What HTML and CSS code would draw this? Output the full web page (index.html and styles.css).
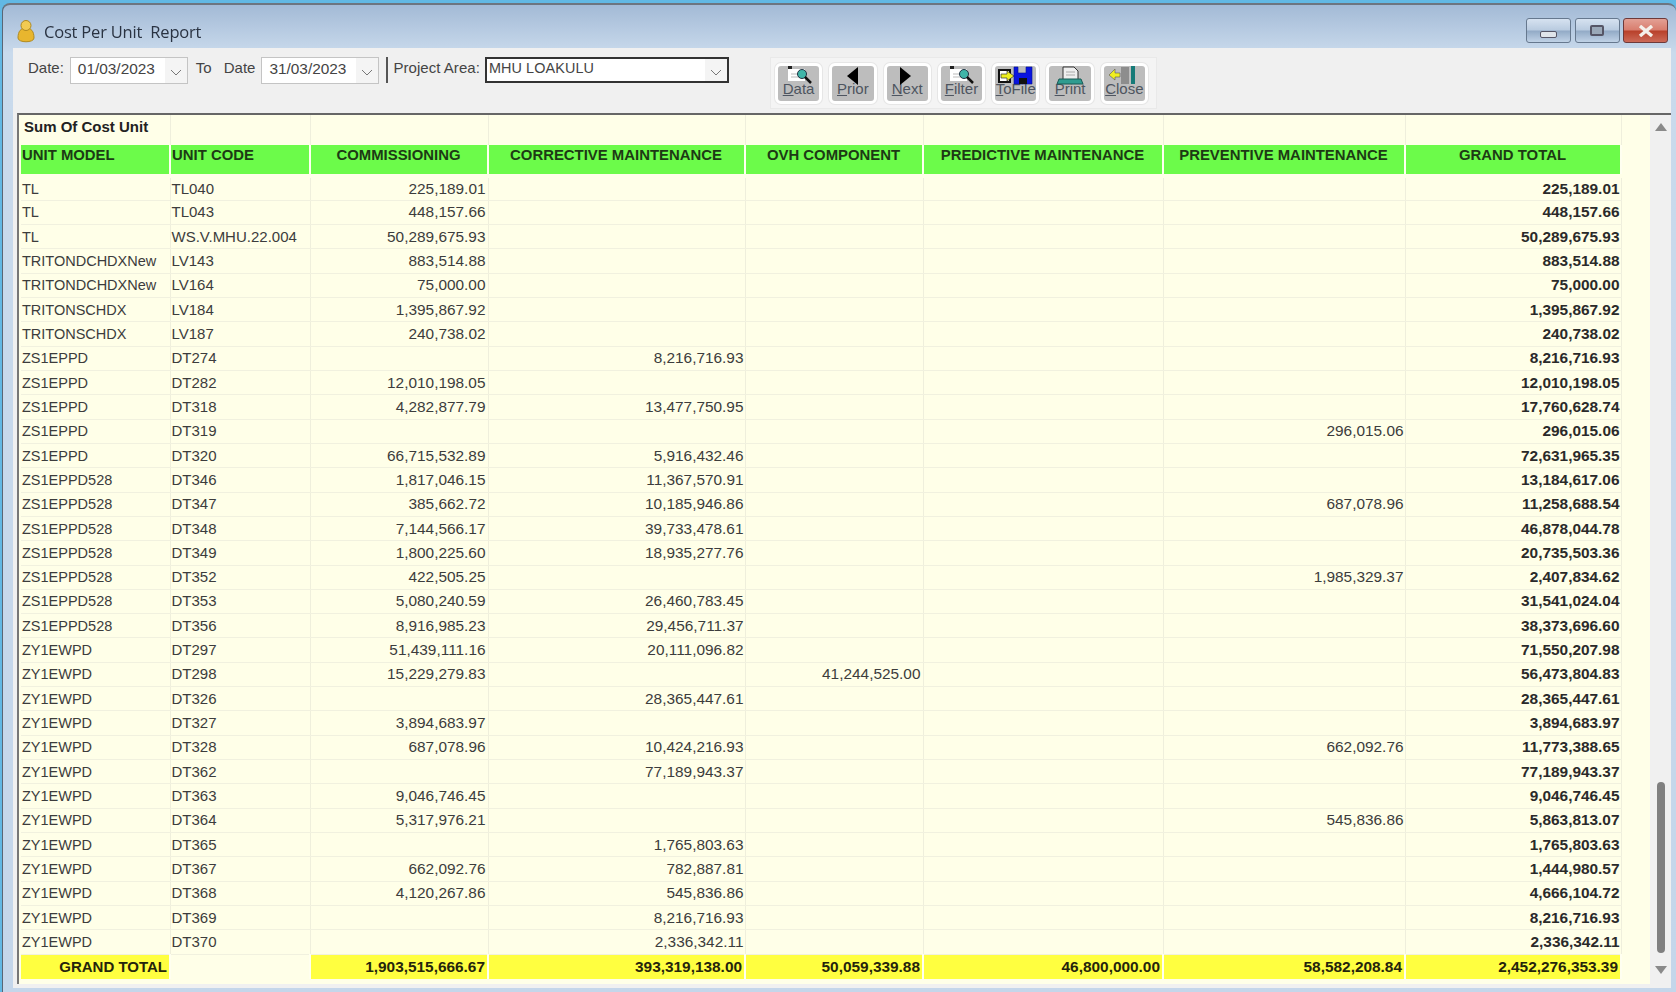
FILE: index.html
```html
<!DOCTYPE html>
<html lang="en">
<head>
    <meta charset="UTF-8">
    <title>Cost Per Unit Report</title>
    <link rel="stylesheet" href="styles.css">
</head>
<body>
    <div class="window">
        <div class="titlebar">
            <svg class="app-icon" width="20" height="24" viewBox="0 0 20 24">
                <path d="M2 19c0-7 3-10 8-10s8 3 8 10c0 5-16 5-16 0z" fill="#e8b62e" stroke="#b08a20"/>
                <circle cx="10" cy="6.5" r="5" fill="#f2cb52" stroke="#b08a20"/>
            </svg>
            <span class="title">Cost Per Unit&nbsp; Report</span>
            <div class="caption-buttons">
                <div class="cap-btn"><span class="cap-min"></span></div>
                <div class="cap-btn"><span class="cap-max"></span></div>
                <div class="cap-btn cap-close"><svg width="16" height="12" viewBox="0 0 16 12"><path d="M2 1l12 10M14 1L2 11" stroke="#f4f0ea" stroke-width="3.4"/></svg></div>
            </div>
        </div>
        <div class="content">
            <div class="toolbar">
                <label class="lbl lbl-date">Date:</label>
                <div class="date-box"><span class="box-text">01/03/2023</span><span class="drop"><svg width="12" height="7" viewBox="0 0 12 7"><path d="M1 1l5 5 5-5" fill="none" stroke="#777"/></svg></span></div>
                <label class="lbl lbl-to">To</label>
                <label class="lbl lbl-date2">Date</label>
                <div class="date-box"><span class="box-text">31/03/2023</span><span class="drop"><svg width="12" height="7" viewBox="0 0 12 7"><path d="M1 1l5 5 5-5" fill="none" stroke="#777"/></svg></span></div>
                <div class="sep"></div>
                <label class="lbl lbl-area">Project Area:</label>
                <div class="combo"><span class="box-text">MHU LOAKULU</span><span class="drop"><svg width="12" height="7" viewBox="0 0 12 7"><path d="M1 1l5 5 5-5" fill="none" stroke="#777"/></svg></span></div>
                <div class="nav-panel">
                    <button class="nav-btn">
                        <svg class="nav-icon" width="36" height="26" viewBox="0 0 36 26"><rect x="7" y="3" width="17" height="12" fill="#fff"/><rect x="7" y="0" width="4" height="3" fill="#222"/><path d="M10 8h9M10 11h9" stroke="#bbb"/><circle cx="21" cy="8" r="4.5" fill="#3fb5a8" stroke="#234"/><path d="M24 11l6 6" stroke="#111" stroke-width="2.5"/></svg>
                        <span class="nav-label"><u>D</u>ata</span>
                    </button>
                    <button class="nav-btn">
                        <svg class="nav-icon" width="36" height="26" viewBox="0 0 36 26"><path d="M23 1v18L12 10z" fill="#000"/></svg>
                        <span class="nav-label"><u>P</u>rior</span>
                    </button>
                    <button class="nav-btn">
                        <svg class="nav-icon" width="36" height="26" viewBox="0 0 36 26"><path d="M11 1v18l11-9z" fill="#000"/></svg>
                        <span class="nav-label"><u>N</u>ext</span>
                    </button>
                    <button class="nav-btn">
                        <svg class="nav-icon" width="36" height="26" viewBox="0 0 36 26"><rect x="7" y="3" width="17" height="12" fill="#fff"/><rect x="7" y="0" width="4" height="3" fill="#222"/><path d="M10 8h9M10 11h9" stroke="#bbb"/><circle cx="21" cy="8" r="4.5" fill="#3fb5a8" stroke="#234"/><path d="M24 11l6 6" stroke="#111" stroke-width="2.5"/></svg>
                        <span class="nav-label"><u>F</u>ilter</span>
                    </button>
                    <button class="nav-btn">
                        <svg class="nav-icon" width="40" height="26" viewBox="0 0 40 26"><rect x="3" y="4" width="11" height="12" fill="#fff" stroke="#111" stroke-width="2"/><path d="M5 8h6V5l7 5-7 5v-3H5z" fill="#eef020" stroke="#333" stroke-width=".7"/><path d="M18 1h4v6h8V1h6v17H18z" fill="#0a14e0" stroke="#001090" stroke-width=".6"/><rect x="23" y="12" width="8" height="6" fill="#111"/></svg>
                        <span class="nav-label"><u>T</u>oFile</span>
                    </button>
                    <button class="nav-btn">
                        <svg class="nav-icon" width="36" height="26" viewBox="0 0 36 26"><path d="M11 1h11l4 4v9H11z" fill="#eee" stroke="#333"/><path d="M7 13h22l2 5H5z" fill="#2f9c90" stroke="#1a5a55"/><path d="M14 6h9M14 9h9" stroke="#aaa"/></svg>
                        <span class="nav-label"><u>P</u>rint</span>
                    </button>
                    <button class="nav-btn">
                        <svg class="nav-icon" width="36" height="26" viewBox="0 0 36 26"><rect x="15" y="1" width="8" height="17" fill="#8d8d8d"/><rect x="25" y="0" width="4" height="18" fill="#167a78"/><path d="M14 7H9V3L3 9l6 5v-3h5z" fill="#f0ee20" stroke="#555" stroke-width=".6"/></svg>
                        <span class="nav-label"><u>C</u>lose</span>
                    </button>
                </div>
            </div>
            <div class="report">
                <table class="grid">
                    <colgroup>
                        <col class="c-model"><col class="c-code"><col class="c-comm"><col class="c-corr">
                        <col class="c-ovh"><col class="c-pred"><col class="c-prev"><col class="c-total">
                    </colgroup>
                    <thead>
                        <tr class="sum-row"><th class="left">Sum Of Cost Unit</th><th></th><th></th><th></th><th></th><th></th><th></th><th></th></tr>
                        <tr class="head-row"><th class="left">UNIT MODEL</th><th class="left">UNIT CODE</th><th>COMMISSIONING</th><th>CORRECTIVE MAINTENANCE</th><th>OVH COMPONENT</th><th>PREDICTIVE MAINTENANCE</th><th>PREVENTIVE MAINTENANCE</th><th>GRAND TOTAL</th></tr>
                    </thead>
                    <tbody>
                        <tr><td>TL</td><td>TL040</td><td>225,189.01</td><td></td><td></td><td></td><td></td><td>225,189.01</td></tr>
                        <tr><td>TL</td><td>TL043</td><td>448,157.66</td><td></td><td></td><td></td><td></td><td>448,157.66</td></tr>
                        <tr><td>TL</td><td>WS.V.MHU.22.004</td><td>50,289,675.93</td><td></td><td></td><td></td><td></td><td>50,289,675.93</td></tr>
                        <tr><td>TRITONDCHDXNew</td><td>LV143</td><td>883,514.88</td><td></td><td></td><td></td><td></td><td>883,514.88</td></tr>
                        <tr><td>TRITONDCHDXNew</td><td>LV164</td><td>75,000.00</td><td></td><td></td><td></td><td></td><td>75,000.00</td></tr>
                        <tr><td>TRITONSCHDX</td><td>LV184</td><td>1,395,867.92</td><td></td><td></td><td></td><td></td><td>1,395,867.92</td></tr>
                        <tr><td>TRITONSCHDX</td><td>LV187</td><td>240,738.02</td><td></td><td></td><td></td><td></td><td>240,738.02</td></tr>
                        <tr><td>ZS1EPPD</td><td>DT274</td><td></td><td>8,216,716.93</td><td></td><td></td><td></td><td>8,216,716.93</td></tr>
                        <tr><td>ZS1EPPD</td><td>DT282</td><td>12,010,198.05</td><td></td><td></td><td></td><td></td><td>12,010,198.05</td></tr>
                        <tr><td>ZS1EPPD</td><td>DT318</td><td>4,282,877.79</td><td>13,477,750.95</td><td></td><td></td><td></td><td>17,760,628.74</td></tr>
                        <tr><td>ZS1EPPD</td><td>DT319</td><td></td><td></td><td></td><td></td><td>296,015.06</td><td>296,015.06</td></tr>
                        <tr><td>ZS1EPPD</td><td>DT320</td><td>66,715,532.89</td><td>5,916,432.46</td><td></td><td></td><td></td><td>72,631,965.35</td></tr>
                        <tr><td>ZS1EPPD528</td><td>DT346</td><td>1,817,046.15</td><td>11,367,570.91</td><td></td><td></td><td></td><td>13,184,617.06</td></tr>
                        <tr><td>ZS1EPPD528</td><td>DT347</td><td>385,662.72</td><td>10,185,946.86</td><td></td><td></td><td>687,078.96</td><td>11,258,688.54</td></tr>
                        <tr><td>ZS1EPPD528</td><td>DT348</td><td>7,144,566.17</td><td>39,733,478.61</td><td></td><td></td><td></td><td>46,878,044.78</td></tr>
                        <tr><td>ZS1EPPD528</td><td>DT349</td><td>1,800,225.60</td><td>18,935,277.76</td><td></td><td></td><td></td><td>20,735,503.36</td></tr>
                        <tr><td>ZS1EPPD528</td><td>DT352</td><td>422,505.25</td><td></td><td></td><td></td><td>1,985,329.37</td><td>2,407,834.62</td></tr>
                        <tr><td>ZS1EPPD528</td><td>DT353</td><td>5,080,240.59</td><td>26,460,783.45</td><td></td><td></td><td></td><td>31,541,024.04</td></tr>
                        <tr><td>ZS1EPPD528</td><td>DT356</td><td>8,916,985.23</td><td>29,456,711.37</td><td></td><td></td><td></td><td>38,373,696.60</td></tr>
                        <tr><td>ZY1EWPD</td><td>DT297</td><td>51,439,111.16</td><td>20,111,096.82</td><td></td><td></td><td></td><td>71,550,207.98</td></tr>
                        <tr><td>ZY1EWPD</td><td>DT298</td><td>15,229,279.83</td><td></td><td>41,244,525.00</td><td></td><td></td><td>56,473,804.83</td></tr>
                        <tr><td>ZY1EWPD</td><td>DT326</td><td></td><td>28,365,447.61</td><td></td><td></td><td></td><td>28,365,447.61</td></tr>
                        <tr><td>ZY1EWPD</td><td>DT327</td><td>3,894,683.97</td><td></td><td></td><td></td><td></td><td>3,894,683.97</td></tr>
                        <tr><td>ZY1EWPD</td><td>DT328</td><td>687,078.96</td><td>10,424,216.93</td><td></td><td></td><td>662,092.76</td><td>11,773,388.65</td></tr>
                        <tr><td>ZY1EWPD</td><td>DT362</td><td></td><td>77,189,943.37</td><td></td><td></td><td></td><td>77,189,943.37</td></tr>
                        <tr><td>ZY1EWPD</td><td>DT363</td><td>9,046,746.45</td><td></td><td></td><td></td><td></td><td>9,046,746.45</td></tr>
                        <tr><td>ZY1EWPD</td><td>DT364</td><td>5,317,976.21</td><td></td><td></td><td></td><td>545,836.86</td><td>5,863,813.07</td></tr>
                        <tr><td>ZY1EWPD</td><td>DT365</td><td></td><td>1,765,803.63</td><td></td><td></td><td></td><td>1,765,803.63</td></tr>
                        <tr><td>ZY1EWPD</td><td>DT367</td><td>662,092.76</td><td>782,887.81</td><td></td><td></td><td></td><td>1,444,980.57</td></tr>
                        <tr><td>ZY1EWPD</td><td>DT368</td><td>4,120,267.86</td><td>545,836.86</td><td></td><td></td><td></td><td>4,666,104.72</td></tr>
                        <tr><td>ZY1EWPD</td><td>DT369</td><td></td><td>8,216,716.93</td><td></td><td></td><td></td><td>8,216,716.93</td></tr>
                        <tr><td>ZY1EWPD</td><td>DT370</td><td></td><td>2,336,342.11</td><td></td><td></td><td></td><td>2,336,342.11</td></tr>
                    </tbody>
                    <tfoot>
                        <tr class="total-row"><td>GRAND TOTAL</td><td class="no-fill"></td><td>1,903,515,666.67</td><td>393,319,138.00</td><td>50,059,339.88</td><td>46,800,000.00</td><td>58,582,208.84</td><td>2,452,276,353.39</td></tr>
                    </tfoot>
                </table>
                <div class="scrollbar">
                    <span class="arrow-up"></span>
                    <span class="thumb"></span>
                    <span class="arrow-down"></span>
                </div>
            </div>
        </div>
    </div>
</body>
</html>
```

FILE: styles.css
```css
html, body {
    margin: 0;
    padding: 0;
    height: 100%;
    overflow: hidden;
}
body {
    background: #62b8e4;
    font-family: "Liberation Sans", Arial, sans-serif;
    color: #333;
}
.window {
    box-sizing: border-box;
    height: 992px;
    margin: 3px 0 0 2px;
    padding: 0 5px 7px 10px;
    background: linear-gradient(180deg, #a3bad6 0, #c9daec 48px, #c4d6ea 100%);
    border-top: 2px solid #6d7580;
    border-left: 1px solid #5a6675;
    border-radius: 8px 8px 0 0;
    display: flex;
    flex-direction: column;
    filter: blur(0.55px);
}

/* title bar */
.titlebar {
    height: 43px;
    flex: none;
    display: flex;
    align-items: center;
}
.app-icon {
    margin: 8px 0 0 3px;
}
.title {
    margin: 10px 0 0 8px;
    font-family: "Open Sans", sans-serif;
    font-size: 16.5px;
    color: #2a3342;
    letter-spacing: -0.2px;
}
.caption-buttons {
    margin-left: auto;
    display: flex;
    gap: 3.5px;
    margin-top: 8px;
    margin-right: 3px;
}
.cap-btn {
    box-sizing: border-box;
    width: 45px;
    height: 25px;
    border: 1px solid #66788e;
    border-radius: 3px;
    background: linear-gradient(180deg, #d6e2f0 0, #b9cbe0 48%, #92aac6 52%, #c0d2e6 100%);
    display: flex;
    align-items: center;
    justify-content: center;
}
.cap-min {
    width: 15px;
    height: 5px;
    margin-top: 7px;
    background: #dfe4ea;
    border: 1px solid #556;
    border-radius: 2px;
}
.cap-max {
    width: 10px;
    height: 7px;
    margin-top: 0;
    background: #9aa8b8;
    border: 2px solid #556;
    border-radius: 2px;
}
.cap-close {
    border-color: #6e3a3a;
    background: linear-gradient(180deg, #e3a094 0, #d87d6e 48%, #b8402a 52%, #cc6a58 100%);
}

/* toolbar */
.content {
    flex: 1;
    min-height: 0;
    background: #f0f0f0;
    display: flex;
    flex-direction: column;
}
.toolbar {
    box-sizing: border-box;
    height: 65px;
    flex: none;
    padding: 9px 0 0 15px;
    display: flex;
    align-items: flex-start;
    font-size: 15px;
}
.lbl {
    line-height: 22px;
    color: #444;
}
.lbl-date { margin-right: 6px; }
.lbl-to { margin: 0 12px 0 8px; }
.lbl-date2 { margin-right: 6px; }
.lbl-area { margin-right: 5px; letter-spacing: 0.05px; }
.date-box, .combo {
    box-sizing: border-box;
    height: 27px;
    background: #fff;
    display: flex;
    align-items: stretch;
}
.date-box {
    width: 118px;
    border: 1px solid #c4c4c4;
}
.combo {
    width: 244px;
    height: 26px;
    border: 2px solid #333;
}
.box-text {
    flex: 1;
    padding: 0 0 0 7px;
    font-size: 15.4px;
    line-height: 21px;
    color: #444;
}
.combo .box-text {
    padding-left: 2px;
    font-size: 14.4px;
    line-height: 18px;
    letter-spacing: 0.1px;
}
.drop {
    width: 22px;
    background: #f4f4f4;
    display: flex;
    align-items: center;
    justify-content: center;
    padding-top: 4px;
}
.sep {
    width: 2px;
    height: 26px;
    margin: 0 5px 0 7px;
    background: #555;
}
.nav-panel {
    box-sizing: border-box;
    width: 387px;
    height: 52px;
    margin-left: 41px;
    padding: 5px 0 0 4px;
    display: flex;
    gap: 7px;
    background: #f4f4f4;
    border: 1px solid #e9e9e9;
}
.nav-btn {
    box-sizing: border-box;
    width: 47.3px;
    height: 41px;
    padding: 0;
    border: 3px solid #fff;
    border-radius: 6px;
    background: #bdbdbd;
    box-shadow: 0 0 0 1px #e6e6e6;
    display: flex;
    flex-direction: column;
    align-items: center;
    overflow: hidden;
    font-family: "Liberation Sans", Arial, sans-serif;
}
.nav-icon {
    flex: none;
    display: block;
    position: relative;
    z-index: 1;
}
.nav-label {
    margin-top: -12px;
    font-size: 15px;
    line-height: 18px;
    color: #4e5560;
}

/* report grid */
.report {
    flex: 1;
    min-height: 0;
    display: flex;
    background: #ffffe8;
    border-top: 2px solid #666;
    border-left: 2px solid #777;
    margin: 0 0 4px 4px;
    padding-left: 2px;
}
.grid {
    table-layout: fixed;
    width: 1600px;
    height: 0;
    border-collapse: collapse;
    border-spacing: 0;
    font-size: 15.4px;
}
.c-model { width: 149px; }
.c-code { width: 140px; }
.c-comm { width: 178px; }
.c-corr { width: 257px; }
.c-ovh { width: 178px; }
.c-pred { width: 240px; }
.c-prev { width: 242px; }
.c-total { width: 216px; }
.grid th, .grid td {
    padding: 0 2px 0 1px;
    overflow: hidden;
    white-space: nowrap;
    font-weight: normal;
    box-sizing: border-box;
}
.grid th { font-weight: bold; text-align: center; }
.grid th.left { text-align: left; }
.sum-row th {
    height: 30px;
    border-right: 1px solid #efefdc;
    color: #222;
    font-size: 15px;
    padding-bottom: 8px;
}
.sum-row th.left { padding-left: 3px; }
.head-row th {
    height: 31px;
    padding-bottom: 10px;
    background: #6cfb4a;
    background-clip: padding-box;
    border-right: 2px solid #fffff0;
    border-bottom: 4px solid #ffffe8;
    color: #1d3a14;
    font-size: 14.9px;
}
.grid tbody td {
    height: 24.32px;
    text-align: right;
    color: #3c3c3c;
    border-right: 1px solid #efefdc;
    border-bottom: 1px solid #f1f1df;
    line-height: 18px;
}
.grid tbody td:nth-child(1) { text-align: left; font-size: 14.5px; }
.grid tbody td:nth-child(2) { text-align: left; font-size: 15px; }
.grid tbody td:nth-child(4) { padding-right: 1px; }
.grid tbody td:nth-child(7) { padding-right: 1px; }
.grid tbody td:nth-child(8) { font-weight: bold; color: #2a2a2a; padding-right: 1px; }
.total-row td {
    height: 25px;
    text-align: right;
    font-weight: bold;
    color: #24240c;
    background: #ffff40;
    background-clip: padding-box;
    border-right: 2px solid #fffff0;
    border-top: 1px solid #ffffe8;
}
.total-row td:first-child { font-size: 15px; }
.total-row td.no-fill { background: #ffffe8; }

.scrollbar {
    position: relative;
    width: 21px;
    margin-left: auto;
    background: #f0f0f0;
}
.arrow-up, .arrow-down {
    position: absolute;
    left: 5px;
    width: 0;
    height: 0;
    border-left: 6px solid transparent;
    border-right: 6px solid transparent;
}
.arrow-up {
    top: 8px;
    border-bottom: 8px solid #8a8a8a;
}
.arrow-down {
    bottom: 10px;
    border-top: 8px solid #8a8a8a;
}
.thumb {
    position: absolute;
    left: 7px;
    top: 667px;
    width: 8px;
    height: 171px;
    border-radius: 4px;
    background: #808080;
}
```
